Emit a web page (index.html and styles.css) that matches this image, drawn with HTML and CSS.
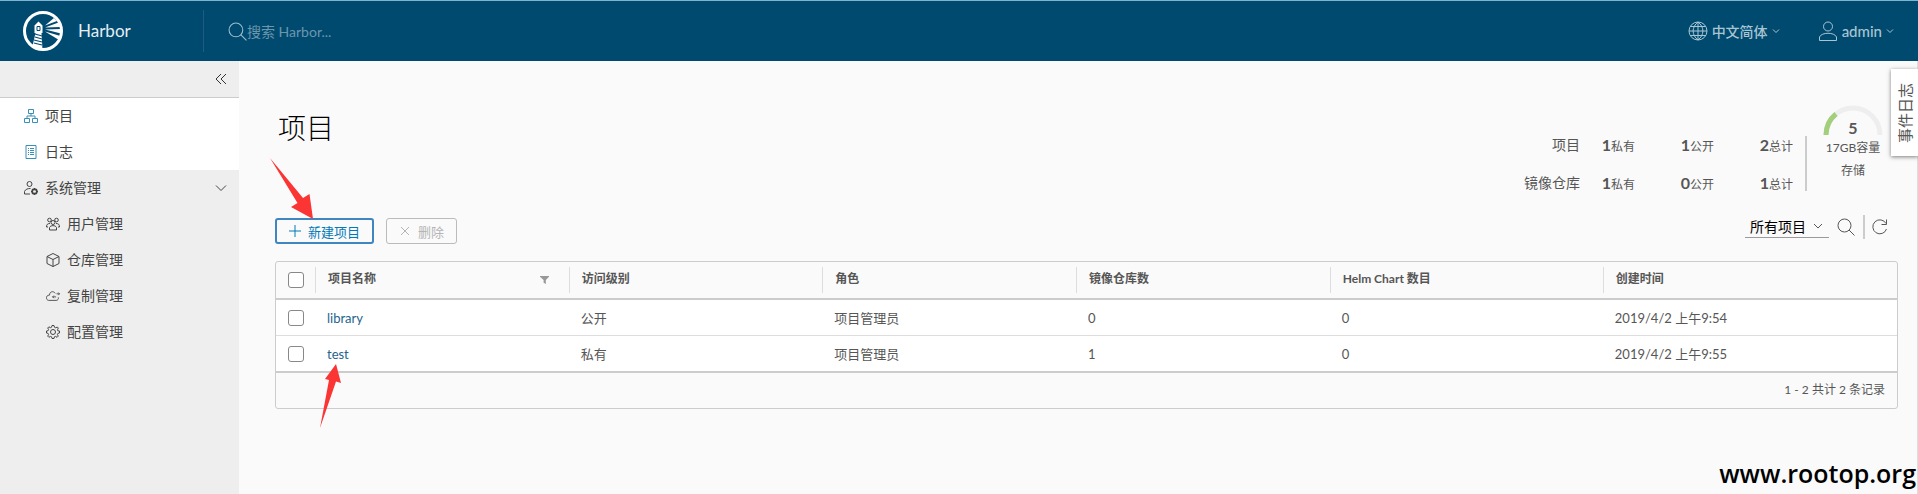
FILE: index.html
```html
<!DOCTYPE html>
<html lang="zh-CN">
<head>
<meta charset="utf-8">
<meta name="viewport" content="width=device-width, initial-scale=1">
<title>Harbor</title>
<link rel="stylesheet" href="styles.css">
</head>
<body>

<header class="topbar">
  <a href="#" class="brand">
    <svg class="logo" viewBox="0 0 40 40">
      <circle cx="20" cy="20" r="18.500" fill="none" stroke="#fff" stroke-width="3"/>
      <path fill="#fff" d="M11.500 14.500l4-4 4 4V22h-1l1 17-10-4 3-13h-1z"/>
      <path fill="none" stroke="#004a70" stroke-width="1" d="M14 15.500h3v4h-3z"/>
      <path fill="none" stroke="#004a70" stroke-width="1.200" d="M12 23l7 2M12 26l7 2M11 29l8 2M11 32l8 2"/>
      <path fill="#fff" d="M22 14.500L31 7l3 3zM22 16.500l13.500-5 1.500 4.500zM22 18.500l16-.5v4.500zM22 20.500L37.500 25l-1.500 4z"/>
    </svg>
    <span>Harbor</span>
  </a>
  <form class="search">
    <svg viewBox="0 0 18 18"><circle cx="7.500" cy="7.500" r="6.500"/><path d="M12 12l5.500 5.500"/></svg>
    <input type="text" placeholder="搜索 Harbor..." aria-label="搜索 Harbor">
  </form>
  <button type="button" class="top-menu lang">
    <svg class="top-icon" viewBox="0 0 20 20"><circle cx="10" cy="10" r="9"/><path d="M10 1v18M1 10h18M2.500 5.500h15M2.500 14.500h15M10 1C3.500 6 3.500 14 10 19M10 1c6.500 5 6.500 13 0 18"/></svg>
    <span>中文简体</span>
    <svg class="caret" viewBox="0 0 8 8"><path d="M1 2.500l3 3 3-3"/></svg>
  </button>
  <button type="button" class="top-menu user">
    <svg class="top-icon" viewBox="0 0 20 20"><circle cx="10" cy="5.500" r="4.500"/><path d="M1.500 19.500v-3.500c2-5 15-5 17 0v3.500z"/></svg>
    <span>admin</span>
    <svg class="caret" viewBox="0 0 8 8"><path d="M1 2.500l3 3 3-3"/></svg>
  </button>
</header>

<div class="layout">
  <nav class="sidebar">
    <button type="button" class="collapse" aria-label="收起">
      <svg viewBox="0 0 12 12"><path d="M6 1L1 6l5 5M11 1L6 6l5 5"/></svg>
    </button>
    <a href="#" class="nav-item active">
      <svg viewBox="0 0 14 14"><path d="M4.500.5h5v4h-5zM.5 9.500h5v4h-5zM8.500 9.500h5v4h-5zM7 4.500V7M3 9.500V7h8v2.500"/></svg>
      <span>项目</span>
    </a>
    <a href="#" class="nav-item active">
      <svg viewBox="0 0 14 14"><path d="M2 .5h10v13H2zM4 3.500h1M4 5.500h1M4 7.500h1M4 9.500h1M6 3.500h4M6 5.500h4M6 7.500h4M6 9.500h4"/></svg>
      <span>日志</span>
    </a>
    <a href="#" class="nav-item">
      <svg viewBox="0 0 14 14"><circle cx="5.500" cy="3" r="2.500"/><path d="M6 13H.5v-2.500C1.500 8 4 7.500 6.500 7.500"/><circle cx="10.500" cy="10.500" r="2.200" stroke-width="2"/><path d="M10.500 7v7M7 10.500h1M13 10.500h1M8 8l1 1M12 12l1 1M8 13l1-1M12 9l1-1"/><circle cx="10.500" cy="10.500" r="1.200" fill="#eee" stroke="none"/></svg>
      <span>系统管理</span>
      <svg class="nav-caret" viewBox="0 0 12 12"><path d="M1 3.500l5 5 5-5"/></svg>
    </a>
    <a href="#" class="nav-item sub">
      <svg viewBox="0 0 14 14"><circle cx="7" cy="5.500" r="2"/><path d="M3.500 13v-2.500c1-2.500 6-2.500 7 0V13zM4 6.500C1.500 6.500.5 7.500.5 10H2M10 6.500c2.500 0 3.500 1 3.500 3.500H12"/><circle cx="3.500" cy="3" r="1.800"/><circle cx="10.500" cy="3" r="1.800"/></svg>
      <span>用户管理</span>
    </a>
    <a href="#" class="nav-item sub">
      <svg viewBox="0 0 14 14"><path d="M7 .5l6 3v7l-6 3-6-3v-7zM1 3.500l6 3 6-3M7 6.500v7"/></svg>
      <span>仓库管理</span>
    </a>
    <a href="#" class="nav-item sub">
      <svg class="cloud" viewBox="0 0 16 14"><path d="M10.500 4C9 1 4 1.500 4 6 1.500 6 .5 7.500.5 9s1 3 2.500 3h8.500c2.500 0 3-2 2.500-3.500M7.500 8h4M9 6.500L7.500 8 9 9.500M12 4.500h3.500M14 3l1.500 1.500L14 6"/></svg>
      <span>复制管理</span>
    </a>
    <a href="#" class="nav-item sub">
      <svg viewBox="0 0 14 14"><circle cx="7" cy="7" r="2.500"/><path d="M6 .5h2l.5 1.800 1.200.5L11.300 2l1 1-.8 1.800.4 1L13.500 6v2l-1.600.4-.5 1.200.9 1.500-1.200 1.200-1.600-.9-1.100.4L8 13.500H6l-.4-1.700-1.200-.4-1.500.9-1.200-1.200.9-1.500-.5-1.200L.5 8V6l1.600-.3.5-1.200L1.700 3l1.200-1.200 1.500.9 1.100-.4z"/></svg>
      <span>配置管理</span>
    </a>
  </nav>

  <main class="content">
    <section class="summary">
      <h1>项目</h1>
      <dl class="stats">
        <dt>项目</dt>
        <dd><b>1</b>私有</dd>
        <dd><b>1</b>公开</dd>
        <dd><b>2</b>总计</dd>
        <dt>镜像仓库</dt>
        <dd><b>1</b>私有</dd>
        <dd><b>0</b>公开</dd>
        <dd><b>1</b>总计</dd>
      </dl>
      <div class="gauge">
        <svg viewBox="0 0 60 31"><path class="track" d="M3 30a27 27 0 0 1 54 0"/><path class="used" d="M3 30a27 27 0 0 1 10-21"/></svg>
        <b>5</b>
        <span>17GB容量</span>
        <span>存储</span>
      </div>
    </section>

    <section class="toolbar">
      <button type="button" class="btn primary">
        <svg viewBox="0 0 12 12"><path d="M6 0v12M0 6h12"/></svg>
        <span>新建项目</span>
      </button>
      <button type="button" class="btn" disabled>
        <svg viewBox="0 0 12 12"><path d="M2 2l8 8M10 2l-8 8"/></svg>
        <span>删除</span>
      </button>
      <div class="filters">
        <div class="select">
          <select aria-label="项目类型">
            <option>所有项目</option>
            <option>私有项目</option>
            <option>公开项目</option>
          </select>
          <svg class="caret" viewBox="0 0 8 8"><path d="M0 2l4 4 4-4"/></svg>
        </div>
        <button type="button" class="icon-btn" aria-label="搜索">
          <svg viewBox="0 0 18 18"><circle cx="7.500" cy="7.500" r="6.500"/><path d="M12 12l5.500 5.500"/></svg>
        </button>
        <button type="button" class="icon-btn refresh" aria-label="刷新">
          <svg viewBox="0 0 18 18"><path d="M15 5.500A7 7 0 1 0 15.500 11M15.500 1.500v5h-5"/></svg>
        </button>
      </div>
    </section>

    <div class="datagrid">
      <table>
        <thead>
          <tr>
            <th class="check"><input type="checkbox" aria-label="全选"></th>
            <th class="c1"><div>项目名称 <svg class="funnel" viewBox="0 0 10 10"><path d="M0 1h10v1L6.500 5.500V10L4 8.500v-3L0 2z"/></svg></div></th>
            <th class="c1"><div>访问级别</div></th>
            <th class="c1"><div>角色</div></th>
            <th class="c1"><div>镜像仓库数</div></th>
            <th class="c2"><div>Helm Chart 数目</div></th>
            <th><div>创建时间</div></th>
          </tr>
        </thead>
        <tbody>
          <tr>
            <td class="check"><input type="checkbox" aria-label="library"></td>
            <td><a href="#">library</a></td>
            <td>公开</td>
            <td>项目管理员</td>
            <td>0</td>
            <td>0</td>
            <td>2019/4/2 上午9:54</td>
          </tr>
          <tr>
            <td class="check"><input type="checkbox" aria-label="test"></td>
            <td><a href="#">test</a></td>
            <td>私有</td>
            <td>项目管理员</td>
            <td>1</td>
            <td>0</td>
            <td>2019/4/2 上午9:55</td>
          </tr>
        </tbody>
      </table>
      <div class="grid-footer">1 - 2 共计 2 条记录</div>
    </div>
  </main>
</div>

<button type="button" class="event-tab">事件日志</button>

<!-- arrows drawn over the page -->
<svg class="arrow arrow-create" viewBox="0 0 44 62"><path d="M0 0l33 40 6.500-4L43 61 21 49l6.500-4z"/></svg>
<svg class="arrow arrow-test" viewBox="0 0 22 64"><path d="M16 0l5 19-5-1.500L0 64 9 16l-4-1z"/></svg>

<div class="watermark">www.rootop.org</div>

</body>
</html>
```
FILE: styles.css
```css
* {
  box-sizing: border-box;
}

body {
  margin: 0;
  min-height: 100vh;
  display: flex;
  flex-direction: column;
  position: relative;
  font-family: Lato, "Noto Sans CJK SC", sans-serif;
  font-size: 14px;
  line-height: 20px;
  color: #565656;
  background-color: #fafafa;
}

a {
  color: #24638c;
  text-decoration: none;
}

button, input, select {
  font-family: inherit;
  font-size: 14px;
  border: none;
  background: none;
  padding: 0;
  margin: 0;
}

button {
  cursor: pointer;
}

svg {
  flex: none;
  fill: none;
  stroke: currentColor;
}

/* top bar */
.topbar {
  display: flex;
  align-items: center;
  height: 61px;
  padding-right: 24px;
  border-top: 1px solid #7fb4cf;
  background-color: #004a70;
  color: #9dbccb;
}

.brand {
  display: flex;
  align-items: center;
  gap: 15px;
  width: 203px;
  padding-left: 23px;
  font-size: 17px;
  color: #e6eef2;
}

.logo {
  width: 40px;
  height: 40px;
  stroke: none;
}

.search {
  flex: 1;
  display: flex;
  align-items: center;
  height: 42px;
  padding-left: 24px;
  border-left: 1px solid #1d5d80;
}

.search svg {
  width: 19px;
  height: 19px;
}

.search input {
  width: 200px;
  color: #fff;
}

.search input::placeholder {
  color: #6b97ad;
  opacity: 1;
}

.top-menu {
  display: flex;
  align-items: center;
  gap: 4px;
  color: #a9c5d2;
  font-weight: 500;
}

.lang {
  margin-right: 38px;
}

.user {
  font-size: 15px;
}

.top-icon {
  width: 20px;
  height: 20px;
}

.caret {
  width: 8px;
  height: 8px;
}

/* side navigation */
.layout {
  flex: 1;
  display: flex;
}

.sidebar {
  flex: none;
  width: 239px;
  background-color: #eee;
}

.collapse {
  display: flex;
  align-items: center;
  justify-content: flex-end;
  width: 100%;
  height: 37px;
  padding-right: 12px;
  border-bottom: 1px solid #ccc;
  color: #333;
}

.collapse svg, .nav-item .nav-caret {
  width: 12px;
  height: 12px;
}

.nav-item {
  display: flex;
  align-items: center;
  gap: 7px;
  height: 36px;
  padding: 0 12px 0 24px;
  color: #444;
}

.nav-item svg {
  width: 14px;
  height: 14px;
}

.nav-item .nav-caret {
  margin-left: auto;
}

.active {
  background-color: #fff;
}

.active svg {
  color: #3a8fb7;
}

.sub {
  padding-left: 46px;
}

/* content */
.content {
  flex: 1;
  padding: 0 19px 0 36px;
  border-right: 1px solid #ddd;
}

.summary {
  display: flex;
  align-items: flex-start;
}

h1 {
  flex: 1;
  margin: 49px 0 0 3px;
  font-size: 28px;
  font-weight: 300;
  line-height: 36px;
  color: #000;
}

.stats {
  display: grid;
  grid-template-columns: auto 55px 79px 79px;
  grid-auto-rows: 16px;
  row-gap: 22px;
  margin: 75px 0 0;
  padding: 1px 12px 0 0;
  border-right: 2px solid #ccc;
  line-height: 16px;
  text-align: right;
}

.stats dd {
  margin: 0;
  font-size: 12px;
}

.stats b, .gauge b {
  font-size: 16px;
}

.gauge {
  position: relative;
  display: flex;
  flex-direction: column;
  align-items: center;
  margin: 44px 15px 0 16px;
  font-size: 12px;
  line-height: 23px;
}

.gauge svg {
  width: 60px;
  height: 31px;
  stroke-width: 5;
}

.gauge b {
  position: absolute;
  top: 11px;
}

.track {
  stroke: #eee;
}

.used {
  stroke: #a3cf7c;
}

/* toolbar */
.toolbar {
  display: flex;
  align-items: flex-end;
  gap: 12px;
  margin: 24px 0 17px;
}

.btn {
  display: flex;
  align-items: center;
  gap: 7px;
  height: 26px;
  padding: 0 12px;
  border: 1px solid #bbb;
  border-radius: 3px;
  font-size: 13px;
}

.btn svg {
  width: 12px;
  height: 12px;
}

.btn:disabled {
  color: #b5b5b5;
  cursor: default;
}

.primary {
  border: 2px solid #3f86c0;
  color: #0079b8;
}

.filters {
  display: flex;
  align-items: flex-start;
  gap: 8px;
  height: 29px;
  margin-left: auto;
  margin-right: 9px;
}

.select {
  display: flex;
  align-items: center;
  padding: 0 7px 0 5px;
  gap: 8px;
  height: 23px;
  border-bottom: 1px solid #9a9a9a;
}

.select select {
  appearance: none;
  color: #000;
}

.icon-btn {
  display: flex;
  align-items: center;
  height: 24px;
  color: #565656;
}

.icon-btn svg {
  width: 18px;
  height: 18px;
}

.refresh {
  padding-left: 6px;
  border-left: 2px solid #ccc;
}

/* data grid */
.datagrid {
  border: 1px solid #ccc;
  border-radius: 3px;
}

table {
  width: 100%;
  table-layout: fixed;
  border-spacing: 0;
}

th, td {
  height: 36px;
  padding: 0 0 0 12px;
  text-align: left;
  font-size: 13px;
}

th {
  height: 38px;
  padding: 0;
  border-bottom: 2px solid #ccc;
  font-size: 12px;
}

th div {
  display: flex;
  align-items: center;
  justify-content: space-between;
  height: 26px;
  padding: 0 20px 2px 12px;
  border-left: 1px solid #ddd;
}

td {
  background-color: #fff;
  border-bottom: 1px solid #ddd;
}

tbody tr:last-child td {
  height: 37px;
  border-bottom: 2px solid #ccc;
}

.check {
  width: 39px;
  padding: 0 0 0 12px;
}

.c1 {
  width: 15.65%;
}

.c2 {
  width: 16.85%;
}

.check input {
  appearance: none;
  display: block;
  width: 16px;
  height: 16px;
  border: 1px solid #888;
  border-radius: 3px;
  background-color: #fff;
}

.funnel {
  width: 9px;
  height: 9px;
  fill: #999;
  stroke: none;
}

.grid-footer {
  height: 35px;
  padding-right: 12px;
  line-height: 34px;
  font-size: 12px;
  text-align: right;
}

/* things that lie over the page */
.event-tab {
  position: absolute;
  top: 69px;
  right: 0;
  width: 27px;
  height: 87px;
  background-color: #fff;
  box-shadow: 0 1px 4px rgba(0, 0, 0, 0.5);
  writing-mode: sideways-lr;
  font-size: 15px;
  color: #565656;
}

.arrow {
  position: absolute;
  fill: #fb3434;
  stroke: none;
}

.arrow-create {
  top: 158px;
  left: 270px;
  width: 44px;
  height: 62px;
}

.arrow-test {
  top: 364px;
  left: 320px;
  width: 22px;
  height: 64px;
}

.watermark {
  position: absolute;
  right: 2px;
  bottom: 5px;
  font-family: "Open Sans", sans-serif;
  font-size: 25px;
  font-weight: 600;
  line-height: 32px;
  color: #000;
}
```
